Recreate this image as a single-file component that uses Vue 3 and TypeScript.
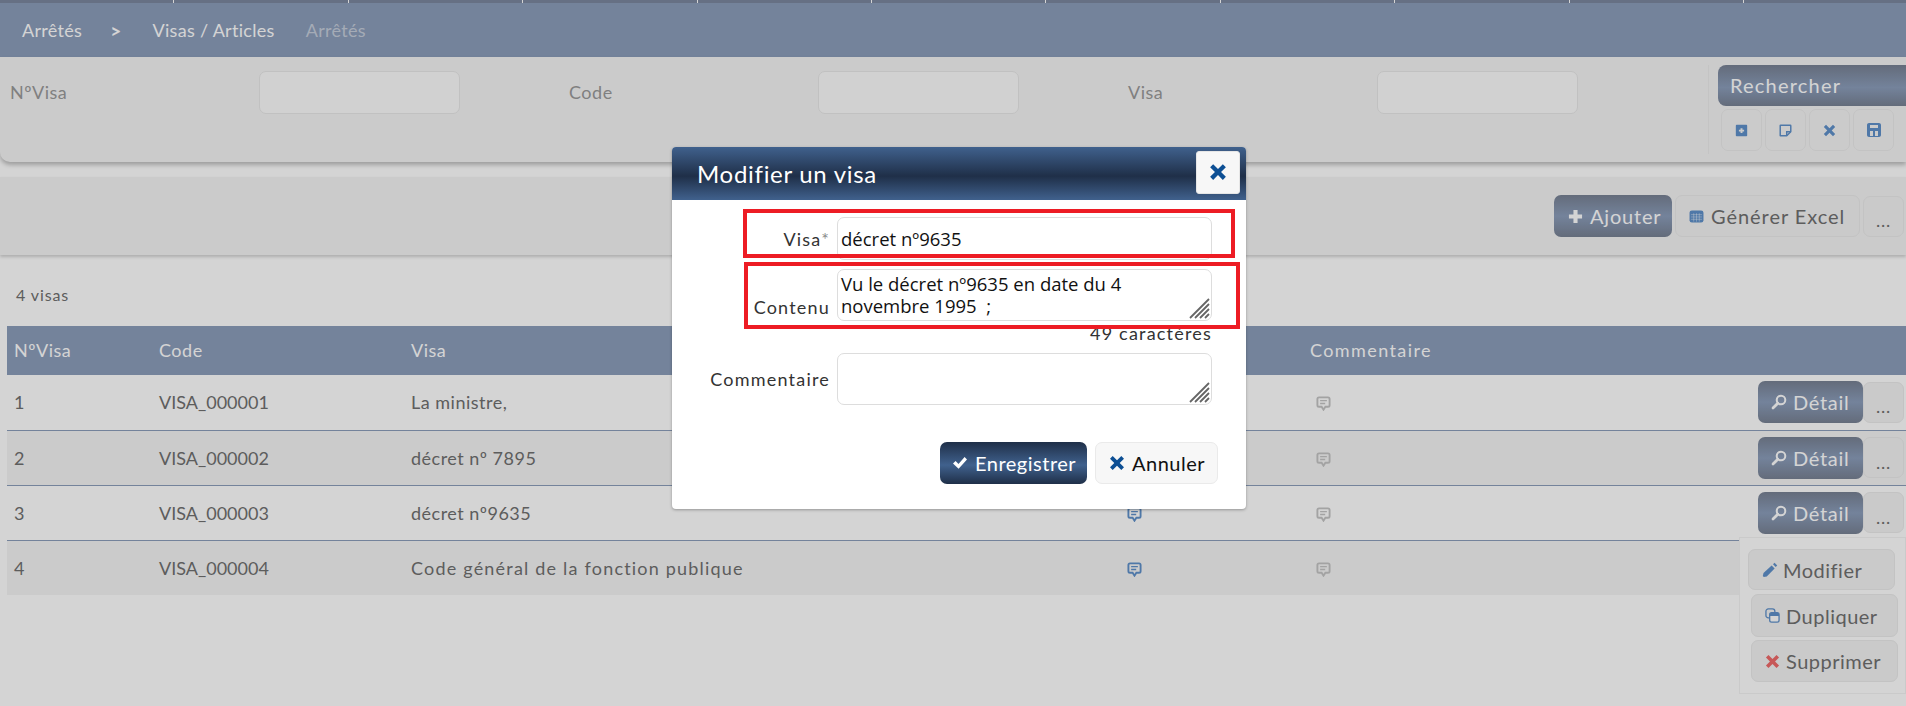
<script setup lang="ts">
interface Visa {
  num: number
  code: string
  name: string
}

const tabs = Array.from({ length: 11 }, (_, i) => i)

const filters = ['NºVisa', 'Code', 'Visa']

const toolIcons = ['i-addnote', 'i-note', 'i-x', 'i-save']

const visas: Visa[] = [
  { num: 1, code: 'VISA_000001', name: 'La ministre,' },
  { num: 2, code: 'VISA_000002', name: 'décret nº 7895' },
  { num: 3, code: 'VISA_000003', name: 'décret nº9635' },
  { num: 4, code: 'VISA_000004', name: 'Code général de la fonction publique' },
]

const contenu = 'Vu le décret nº9635 en date du 4 novembre 1995  ;'
</script>

<template>
  <div class="page">
    <svg class="defs" width="0" height="0">
      <symbol id="i-x" viewBox="0 0 16 16">
        <path d="M3.7 1 8 5.3 12.3 1 15 3.7 10.7 8 15 12.3 12.3 15 8 10.7 3.7 15 1 12.3 5.3 8 1 3.7z" fill="currentColor" />
      </symbol>
      <symbol id="i-plus" viewBox="0 0 16 16">
        <path d="M5.8 1h4.4v4.8H15v4.4h-4.8V15H5.8v-4.8H1V5.8h4.8z" fill="currentColor" />
      </symbol>
      <symbol id="i-check" viewBox="0 0 16 16">
        <path d="M1 8.6 3.6 6l2.9 2.9L12.6 2 15 4.4 6.6 13.8z" fill="currentColor" />
      </symbol>
      <symbol id="i-search" viewBox="0 0 16 16">
        <circle cx="10" cy="6" r="4.3" fill="none" stroke="currentColor" stroke-width="2" />
        <path d="M6.8 9.2 2 14" fill="none" stroke="currentColor" stroke-width="2.8" stroke-linecap="round" />
      </symbol>
      <symbol id="i-pencil" viewBox="0 0 16 16">
        <path d="M1.5 11 9.6 3.4l3 3L4.8 14.4l-3 .6-1-1z" fill="currentColor" />
        <path d="M11 2.2 12.6.8l2.6 2.6-1.5 1.6z" fill="currentColor" />
      </symbol>
      <symbol id="i-copy" viewBox="0 0 16 16">
        <rect x="1" y="1" width="9.5" height="9.5" rx="2.5" fill="none" stroke="currentColor" stroke-width="1.4" />
        <rect x="5" y="5" width="10" height="10" rx="2" fill="#fff" stroke="currentColor" stroke-width="1.4" />
        <path d="M5 7c0-1.2.8-2 2-2h6c1.2 0 2 .8 2 2v1.5H5z" fill="currentColor" />
      </symbol>
      <symbol id="i-comment" viewBox="0 0 16 16">
        <path d="M3.2 1.5h9.6c1 0 1.7.7 1.7 1.7v6.6c0 1-.7 1.7-1.7 1.7H10L8 14.6 6 11.5H3.2c-1 0-1.7-.7-1.7-1.7V3.2c0-1 .7-1.7 1.7-1.7z" fill="none" stroke="currentColor" stroke-width="2" />
        <path d="M4.4 5h7.2M4.4 8h5.4" fill="none" stroke="currentColor" stroke-width="1.4" />
      </symbol>
      <symbol id="i-addnote" viewBox="0 0 16 16">
        <path d="M2 1h12a1 1 0 0 1 1 1v12a1 1 0 0 1-1 1H2a1 1 0 0 1-1-1V2a1 1 0 0 1 1-1zm4.800 4.200v2H4.800v2h2v2h2.400v-2h2v-2h-2v-2z" fill="currentColor" fill-rule="evenodd" />
      </symbol>
      <symbol id="i-note" viewBox="0 0 16 16">
        <path d="M2 1.5h12c.3 0 .5.2.5.5v7.5l-5 5H2c-.3 0-.5-.2-.5-.5V2c0-.3.2-.5.5-.5z" fill="none" stroke="currentColor" stroke-width="1.8" />
        <path d="M9.5 14.5V9.5h5" fill="none" stroke="currentColor" stroke-width="1.8" />
      </symbol>
      <symbol id="i-save" viewBox="0 0 16 16">
        <path d="M3 1h10c1.100 0 2 .9 2 2v10c0 1.100-.9 2-2 2H3c-1.100 0-2-.9-2-2V3c0-1.100.9-2 2-2zm1 2v3h8V3zm0 6v5h3V9zm5 0v5h3V9z" fill="currentColor" fill-rule="evenodd" />
      </symbol>
      <symbol id="i-grid" viewBox="0 0 16 14">
        <rect x="0.5" y="0.5" width="15" height="13" rx="2.5" fill="currentColor" />
        <path d="M2 5h12M2 7.500h12M2 10h12M5 3.500v9M8 3.500v9M11 3.500v9" fill="none" stroke="#fff" stroke-width="0.7" opacity="0.6" />
      </symbol>
      <symbol id="i-grip" viewBox="0 0 21 21">
        <path d="M1 20 20 1M6 20 20 6M11 20l9-9M16 20l4-4" fill="none" stroke="#666" stroke-width="1.8" />
      </symbol>
    </svg>

    <div class="tabs">
      <span v-for="t in tabs" :key="t" class="tab"></span>
    </div>

    <nav class="crumbs">
      <a>Arrêtés</a>
      <b class="sep">&gt;</b>
      <a>Visas / Articles</a>
      <a class="muted">Arrêtés</a>
    </nav>

    <section class="filter">
      <div class="fields">
        <div v-for="f in filters" :key="f" class="field">
          <label class="f-label">{{ f }}</label>
          <input class="f-input" type="text" />
        </div>
      </div>
      <div class="search">
        <button class="btn-search">Rechercher</button>
        <div class="tools">
          <button v-for="ic in toolIcons" :key="ic" class="tool">
            <svg :class="ic === 'i-save' ? 'ic-save' : 'ic-tool'"><use :href="'#' + ic" /></svg>
          </button>
        </div>
      </div>
    </section>

    <section class="actions">
      <button class="btn dark add"><svg class="ic-sm light"><use href="#i-plus" /></svg>Ajouter</button>
      <button class="btn soft excel"><svg class="ic-grid"><use href="#i-grid" /></svg>Générer Excel</button>
      <button class="btn soft dots">...</button>
    </section>

    <div class="count">4 visas</div>

    <table class="grid">
      <colgroup>
        <col style="width: 145px" />
        <col style="width: 252px" />
        <col style="width: 715px" />
        <col style="width: 184px" />
        <col style="width: 430px" />
        <col />
      </colgroup>
      <thead>
        <tr>
          <th>NºVisa</th>
          <th>Code</th>
          <th>Visa</th>
          <th>Contenu</th>
          <th class="wide">Commentaire</th>
          <th></th>
        </tr>
      </thead>
      <tbody>
        <tr v-for="v in visas" :key="v.num">
          <td>{{ v.num }}</td>
          <td class="code">{{ v.code }}</td>
          <td class="name">{{ v.name }}</td>
          <td><svg class="ic-comment on"><use href="#i-comment" /></svg></td>
          <td><svg class="ic-comment rem"><use href="#i-comment" /></svg></td>
          <td class="row-actions">
            <div v-if="v.num < 4" class="row-btns">
              <button class="btn dark detail"><svg class="ic-md light"><use href="#i-search" /></svg>Détail</button>
              <button class="btn soft dots">...</button>
            </div>
          </td>
        </tr>
      </tbody>
    </table>

    <div class="menu">
      <button class="btn soft m-item first"><svg class="ic-md blue"><use href="#i-pencil" /></svg>Modifier</button>
      <button class="btn soft m-item second"><svg class="ic-sm blue"><use href="#i-copy" /></svg>Dupliquer</button>
      <button class="btn soft m-item"><svg class="ic-sm red"><use href="#i-x" /></svg>Supprimer</button>
    </div>

    <div class="backdrop"></div>

    <div class="modal">
      <header class="m-head">
        <h2>Modifier un visa</h2>
        <button class="m-close"><svg class="ic-close"><use href="#i-x" /></svg></button>
      </header>
      <form class="m-body" @submit.prevent>
        <div class="m-row first-row">
          <label class="m-label">Visa<span class="req">*</span></label>
          <input class="m-input" type="text" value="décret nº9635" />
        </div>
        <div class="m-row area-row">
          <label class="m-label low">Contenu</label>
          <div class="area">
            <textarea class="m-area" :value="contenu"></textarea>
            <svg class="grip"><use href="#i-grip" /></svg>
          </div>
        </div>
        <div class="chars">49 caractères</div>
        <div class="m-row comment-row">
          <label class="m-label">Commentaire</label>
          <div class="area">
            <textarea class="m-area"></textarea>
            <svg class="grip"><use href="#i-grip" /></svg>
          </div>
        </div>
        <div class="m-foot">
          <button class="save"><svg class="ic-md white"><use href="#i-check" /></svg>Enregistrer</button>
          <button class="cancel"><svg class="ic-md navy"><use href="#i-x" /></svg>Annuler</button>
        </div>
      </form>
      <div class="mark mark-a"></div>
      <div class="mark mark-b"></div>
    </div>
  </div>
</template>

<style>
html,
body {
  margin: 0;
  overflow: hidden;
  background: #fff;
}
</style>

<style scoped>
.page {
  position: relative;
  width: 1906px;
  height: 706px;
  overflow: hidden;
  background: #fff;
  color: #707070;
  font-family: Lato, 'Open Sans', sans-serif;
  font-size: 18px;
  letter-spacing: 0.5px;
}

.defs {
  position: absolute;
}

button {
  font: inherit;
  letter-spacing: inherit;
  cursor: pointer;
}

.tabs {
  display: flex;
  height: 3px;
  background: #7b879f;
}

.tab {
  flex: 0 0 174.4px;
  box-sizing: border-box;
  border-right: 1px solid #fff;
}

.crumbs {
  display: flex;
  align-items: center;
  height: 54px;
  padding-left: 22px;
  background: #8c9ebb;
  color: #fff;
  letter-spacing: 0.3px;
}

.sep {
  margin: 0 31px 0 28px;
  font-size: 19px;
}

.crumbs .muted {
  margin-left: 31px;
  color: #c6cedb;
}

.filter {
  display: flex;
  height: 105px;
  background: #f5f5f5;
  border-radius: 0 0 0 10px;
  box-shadow: 0 3px 4px rgba(0, 0, 0, 0.25);
}

.fields {
  display: grid;
  grid-template-columns: repeat(3, 559px);
  align-content: start;
  width: 1709px;
  height: 89px;
  box-sizing: border-box;
  margin: 8px 0;
  padding: 6px 0 0 10px;
  border-right: 1px solid #ececec;
}

.field {
  display: flex;
}

.f-label {
  flex: 0 0 249px;
  line-height: 43px;
  color: #9a9a9a;
}

.f-input {
  box-sizing: border-box;
  width: 201px;
  height: 43px;
  background: #fcfcfc;
  border: 1px solid #e8e8e8;
  border-radius: 7px;
}

.search {
  flex: 1;
  padding: 8px 0 0 9px;
}

.btn-search {
  display: block;
  width: 100%;
  height: 41px;
  padding: 0 0 2px 12px;
  text-align: left;
  border: 0;
  border-radius: 8px 0 0 8px;
  background: linear-gradient(#788294, #8c9ebb 55%, #788294);
  color: #fff;
  font-size: 20px;
  letter-spacing: 1.2px;
}

.tools {
  display: flex;
  gap: 3px;
  padding: 3px 0 0 3px;
}

.tool {
  display: flex;
  align-items: center;
  justify-content: center;
  width: 41px;
  height: 42px;
  padding: 0;
  background: #f5f5f5;
  border: 1px solid #ebebeb;
  border-radius: 7px;
  color: #6091ca;
}

.ic-tool {
  width: 13px;
  height: 13px;
}

.ic-save {
  width: 16px;
  height: 16px;
}

.actions {
  display: flex;
  justify-content: flex-end;
  align-items: center;
  gap: 3px;
  height: 78px;
  margin-top: 15px;
  padding-right: 2px;
  background: #f5f5f5;
  box-shadow: 0 2px 3px rgba(0, 0, 0, 0.18);
  font-size: 20px;
  letter-spacing: 0.8px;
}

.btn {
  display: inline-flex;
  align-items: center;
  justify-content: flex-start;
  box-sizing: border-box;
  height: 42px;
  padding: 0;
  border-radius: 7px;
  white-space: nowrap;
}

.btn.dark {
  background: linear-gradient(#788294, #8c9ebb 50%, #788294);
  border: 0;
  color: #fff;
}

.btn.soft {
  background: #f3f3f3;
  border: 1px solid #ebebeb;
  color: #707070;
}

.add {
  width: 118px;
  gap: 7px;
  padding-left: 14px;
}

.btn.excel {
  width: 185px;
  gap: 7px;
  padding-left: 13px;
  letter-spacing: 0.95px;
}

.btn.dots {
  justify-content: center;
  width: 41px;
  height: 41px;
  padding-top: 8px;
  font-size: 18px;
}

.ic-sm {
  width: 15px;
  height: 15px;
  flex: none;
}

.ic-md {
  width: 16px;
  height: 16px;
  flex: none;
}

.light,
.white {
  color: #fff;
}

.blue {
  color: #6091ca;
}

.red {
  color: #f06a6a;
}

.navy {
  color: #0d4f94;
}

.ic-grid {
  width: 15px;
  height: 13px;
  color: #6091ca;
}

.count {
  display: flex;
  align-items: center;
  box-sizing: border-box;
  height: 71px;
  padding: 8px 0 0 16px;
  font-size: 16px;
  letter-spacing: 0.9px;
}

.grid {
  width: 1899px;
  margin-left: 7px;
  table-layout: fixed;
  border-collapse: collapse;
}

.grid th {
  box-sizing: border-box;
  height: 49px;
  padding: 0 7px 2px;
  background: #8c9ebb;
  color: #fff;
  font-weight: 400;
  text-align: left;
}

.grid th.wide {
  letter-spacing: 1.4px;
}

.grid td {
  height: 55px;
  padding: 0 7px;
  box-sizing: border-box;
  border-bottom: 1px solid #8c9ebb;
  vertical-align: middle;
  white-space: nowrap;
}

.grid td.code {
  letter-spacing: 0;
}

.grid tbody tr:last-child td.name {
  letter-spacing: 1.2px;
}

.grid tbody tr:nth-child(even) td {
  background: #f5f5f5;
}

.grid tbody tr:last-child td {
  border-bottom: 0;
}

.ic-comment {
  display: block;
  width: 15px;
  height: 15px;
  margin: 3px 0 0 1px;
}

.ic-comment.on {
  color: #6091ca;
}

.ic-comment.rem {
  margin-left: 6px;
  color: #c4c4c4;
}

.grid td.row-actions {
  padding: 0 2px 0 0;
}

.row-btns {
  display: flex;
  justify-content: flex-end;
  align-items: center;
  font-size: 20px;
  letter-spacing: 0.7px;
}

.detail {
  width: 105px;
  gap: 6px;
  padding-left: 13px;
}

.menu {
  position: absolute;
  top: 537px;
  left: 1739px;
  display: flex;
  flex-direction: column;
  box-sizing: border-box;
  width: 167px;
  height: 157px;
  padding: 11px 0 0 11px;
  background: #fff;
  border: 1px solid #f3f3f3;
  font-size: 20px;
  letter-spacing: 0.5px;
}

.m-item {
  gap: 6px;
  width: 147px;
  padding-left: 13px;
}

.m-item.first {
  height: 41px;
  margin: 0 0 4px -3px;
  gap: 5px;
}

.m-item.second {
  height: 43px;
  margin-bottom: 3px;
}

.backdrop {
  position: absolute;
  inset: 0;
  background: rgba(0, 0, 0, 0.17);
}

.modal {
  position: absolute;
  top: 147px;
  left: 672px;
  width: 574px;
  height: 362px;
  background: #fff;
  border-radius: 4px;
  box-shadow: 0 1px 3px rgba(0, 0, 0, 0.3);
  color: #333;
}

.m-head {
  display: flex;
  align-items: center;
  justify-content: space-between;
  box-sizing: border-box;
  height: 53px;
  padding: 0 6px 0 25px;
  background: linear-gradient(#40618d, #1f2f48 55%, #40618d);
  border-radius: 4px 4px 0 0;
  color: #fff;
}

.m-head h2 {
  margin: 0;
  font-size: 24px;
  font-weight: 400;
  letter-spacing: 0.7px;
}

.m-close {
  display: flex;
  align-items: center;
  justify-content: center;
  width: 44px;
  height: 43px;
  margin-bottom: 3px;
  padding: 0;
  background: #f7f7f7;
  border: 1px solid #e6e6e6;
  border-radius: 3px;
}

.ic-close {
  width: 18px;
  height: 18px;
  color: #0d4f94;
}

.m-body {
  display: flex;
  flex-direction: column;
  letter-spacing: 1.2px;
}

.m-row {
  display: flex;
  align-items: center;
}

.first-row {
  margin-top: 17px;
}

.area-row {
  margin-top: 9px;
}

.comment-row {
  margin-top: 10px;
}

.m-label {
  flex: 0 0 158px;
  box-sizing: border-box;
  text-align: right;
}

.m-label.low {
  align-self: flex-end;
  padding-bottom: 3px;
}

.req {
  color: #8a8a8a;
}

.m-input,
.area {
  box-sizing: border-box;
  width: 375px;
  margin-left: 7px;
}

.m-input {
  height: 43px;
  padding: 0 3px;
  border: 1px solid #ddd;
  border-radius: 7px;
  color: #111;
  font-family: 'Open Sans', sans-serif;
  font-size: 18.5px;
  letter-spacing: 0;
  outline: none;
}

.area {
  position: relative;
  height: 52px;
}

.m-area {
  display: block;
  box-sizing: border-box;
  width: 100%;
  height: 100%;
  padding: 3px 20px 0 3px;
  overflow: hidden;
  border: 1px solid #ddd;
  border-radius: 7px;
  color: #111;
  font-family: 'Open Sans', sans-serif;
  font-size: 18.5px;
  line-height: 22px;
  letter-spacing: 0;
  resize: none;
  outline: none;
}

.grip {
  position: absolute;
  right: 2px;
  bottom: 2px;
  width: 21px;
  height: 21px;
}

.chars {
  width: 540px;
  height: 20px;
  margin-top: 2px;
  line-height: 20px;
  text-align: right;
}

.m-foot {
  display: flex;
  justify-content: flex-end;
  gap: 8px;
  margin-top: 37px;
  padding-right: 28px;
}

.save,
.cancel {
  display: inline-flex;
  align-items: center;
  box-sizing: border-box;
  height: 42px;
  border-radius: 7px;
  font-size: 20px;
  letter-spacing: 0.5px;
}

.save {
  gap: 7px;
  width: 147px;
  padding: 0 0 0 12px;
  border: 0;
  background: linear-gradient(#1f2f48, #40618d 55%, #1f2f48);
  color: #fff;
}

.cancel {
  gap: 7px;
  width: 123px;
  padding: 0 0 0 13px;
  background: #f7f7f7;
  border: 1px solid #eaeaea;
  color: #111;
}

.mark {
  position: absolute;
  box-sizing: border-box;
  border: 4px solid #ed1c24;
  pointer-events: none;
}

.mark-a {
  top: 62px;
  left: 71px;
  width: 492px;
  height: 49px;
}

.mark-b {
  top: 115px;
  left: 72px;
  width: 496px;
  height: 67px;
}
</style>
